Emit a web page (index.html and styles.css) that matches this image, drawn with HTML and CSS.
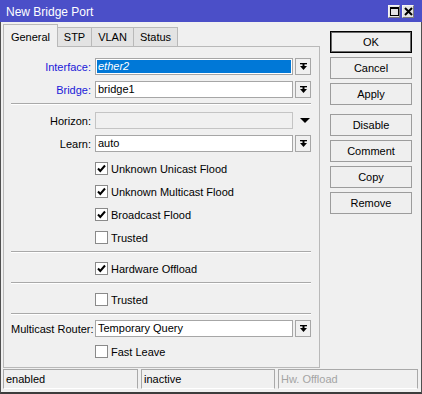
FILE: index.html
```html
<!DOCTYPE html>
<html lang="en">
<head>
    <meta charset="UTF-8">
    <title>New Bridge Port</title>
    <link rel="stylesheet" href="styles.css">
</head>
<body>
    <div class="window">
        <div class="titlebar">
            <span class="title">New Bridge Port</span>
            <div class="winbtns">
                <span class="winbtn">
                    <svg width="9" height="9" viewBox="0 0 9 9"><rect x="0.5" y="0.5" width="8" height="8" fill="none" stroke="#000"/><rect x="0" y="0" width="9" height="2" fill="#000"/></svg>
                </span>
                <span class="winbtn">
                    <svg width="9" height="9" viewBox="0 0 9 9"><path d="M1 1 L8 8 M8 1 L1 8" stroke="#000" stroke-width="2"/></svg>
                </span>
            </div>
        </div>

        <div class="frame">
            <div class="main">
                <div class="left">
                    <div class="tabs">
                        <div class="tab active t-general">General</div>
                        <div class="tab t-stp">STP</div>
                        <div class="tab t-vlan">VLAN</div>
                        <div class="tab t-status">Status</div>
                    </div>

                    <div class="panel">
                        <div class="row">
                            <div class="lbl link">Interface:</div>
                            <div class="field"><span class="selval">ether2</span></div>
                            <span class="drop"><svg width="7" height="7" viewBox="0 0 7 7"><rect x="0" y="0" width="7" height="1.3"/><rect x="2.5" y="1" width="2" height="2"/><polygon points="0,3 7,3 3.5,7"/></svg></span>
                        </div>
                        <div class="row">
                            <div class="lbl link">Bridge:</div>
                            <div class="field">bridge1</div>
                            <span class="drop"><svg width="7" height="7" viewBox="0 0 7 7"><rect x="0" y="0" width="7" height="1.3"/><rect x="2.5" y="1" width="2" height="2"/><polygon points="0,3 7,3 3.5,7"/></svg></span>
                        </div>

                        <div class="sep"></div>

                        <div class="row">
                            <div class="lbl">Horizon:</div>
                            <div class="field disabled"></div>
                            <span class="drop plain"><svg width="10" height="5" viewBox="0 0 10 5"><polygon points="0,0 10,0 5,5"/></svg></span>
                        </div>
                        <div class="row">
                            <div class="lbl">Learn:</div>
                            <div class="field">auto</div>
                            <span class="drop"><svg width="7" height="7" viewBox="0 0 7 7"><rect x="0" y="0" width="7" height="1.3"/><rect x="2.5" y="1" width="2" height="2"/><polygon points="0,3 7,3 3.5,7"/></svg></span>
                        </div>

                        <div class="row check first">
                            <span class="cb"><svg width="11" height="11" viewBox="0 0 11 11"><polyline points="2,5.5 4.3,8 9,2.5" fill="none" stroke="#000" stroke-width="2"/></svg></span>
                            <span>Unknown Unicast Flood</span>
                        </div>
                        <div class="row check">
                            <span class="cb"><svg width="11" height="11" viewBox="0 0 11 11"><polyline points="2,5.5 4.3,8 9,2.5" fill="none" stroke="#000" stroke-width="2"/></svg></span>
                            <span>Unknown Multicast Flood</span>
                        </div>
                        <div class="row check">
                            <span class="cb"><svg width="11" height="11" viewBox="0 0 11 11"><polyline points="2,5.5 4.3,8 9,2.5" fill="none" stroke="#000" stroke-width="2"/></svg></span>
                            <span>Broadcast Flood</span>
                        </div>
                        <div class="row check">
                            <span class="cb"></span>
                            <span>Trusted</span>
                        </div>

                        <div class="sep"></div>

                        <div class="row check">
                            <span class="cb"><svg width="11" height="11" viewBox="0 0 11 11"><polyline points="2,5.5 4.3,8 9,2.5" fill="none" stroke="#000" stroke-width="2"/></svg></span>
                            <span>Hardware Offload</span>
                        </div>

                        <div class="sep"></div>

                        <div class="row check">
                            <span class="cb"></span>
                            <span>Trusted</span>
                        </div>

                        <div class="sep tight"></div>

                        <div class="row">
                            <div class="lbl">Multicast Router:</div>
                            <div class="field">Temporary Query</div>
                            <span class="drop"><svg width="7" height="7" viewBox="0 0 7 7"><rect x="0" y="0" width="7" height="1.3"/><rect x="2.5" y="1" width="2" height="2"/><polygon points="0,3 7,3 3.5,7"/></svg></span>
                        </div>
                        <div class="row check">
                            <span class="cb"></span>
                            <span>Fast Leave</span>
                        </div>
                    </div>
                </div>

                <div class="buttons">
                    <div class="btn default">OK</div>
                    <div class="btn">Cancel</div>
                    <div class="btn">Apply</div>
                    <div class="btn spaced">Disable</div>
                    <div class="btn">Comment</div>
                    <div class="btn">Copy</div>
                    <div class="btn">Remove</div>
                </div>
            </div>

            <div class="statusbar">
                <div class="stat s1">enabled</div>
                <div class="stat s2">inactive</div>
                <div class="stat s3 muted">Hw. Offload</div>
            </div>
        </div>
    </div>
</body>
</html>
```

FILE: styles.css
```css
body {
    margin: 0;
    font-family: "Liberation Sans", Arial, sans-serif;
    font-size: 11px;
    color: #000;
    background-color: #f0f0f0;
}

.window {
    width: 422px;
    height: 394px;
    display: flex;
    flex-direction: column;
    background-color: #f0f0f0;
}

.titlebar {
    flex: none;
    height: 22px;
    background-color: #4b4fc8;
    color: #fff;
    display: flex;
    align-items: center;
    justify-content: space-between;
    padding: 0 8px 0 6px;
    box-sizing: border-box;
}

.title {
    font-size: 12px;
    padding-top: 1px;
}

.winbtns {
    display: flex;
    gap: 2px;
    padding-top: 1px;
}

.winbtn {
    width: 12px;
    height: 13px;
    box-sizing: border-box;
    background-color: #e4e4e4;
    border: 1px solid #f4f4f4;
    border-right-color: #7a7a7a;
    border-bottom-color: #7a7a7a;
    display: flex;
    align-items: center;
    justify-content: center;
}

.frame {
    flex: 1;
    display: flex;
    flex-direction: column;
    border-left: 1px solid #505050;
    border-right: 1px solid #505050;
    border-bottom: 2px solid #3c3c3c;
}

.main {
    display: flex;
    padding: 2px 0 0 2px;
}

.left {
    width: 317px;
}

/* tabs */

.tabs {
    display: flex;
    align-items: flex-end;
    height: 22px;
}

.tab {
    box-sizing: border-box;
    height: 19px;
    padding-top: 3px;
    text-align: center;
    line-height: 13px;
    background-color: #e3e3e3;
    border: 1px solid #b9b9b9;
    border-bottom: none;
    border-left: none;
}

.tab.active {
    position: relative;
    z-index: 1;
    height: 23px;
    margin-bottom: -1px;
    padding-top: 6px;
    background-color: #f0f0f0;
    border-left: 1px solid #b9b9b9;
}

.t-general { width: 55px; }
.t-stp { width: 34px; }
.t-vlan { width: 42px; }
.t-status { width: 44px; }

.panel {
    box-sizing: border-box;
    height: 322px;
    border: 1px solid #b9b9b9;
    padding: 11px 8px 0 7px;
}

/* rows */

.row {
    display: flex;
    align-items: center;
    height: 17px;
    margin-top: 6px;
}

.row:first-child {
    margin-top: 0;
}

.lbl {
    width: 80px;
    margin-right: 4px;
    text-align: right;
    white-space: nowrap;
}

.lbl.link {
    color: #1a1ad8;
}

.field {
    box-sizing: border-box;
    width: 198px;
    height: 17px;
    background-color: #fff;
    border: 1px solid #a6a6a6;
    padding: 0 2px;
    line-height: 15px;
    white-space: nowrap;
    overflow: hidden;
}

.field.disabled {
    background-color: #f0f0f0;
    border-color: #c4c4c4;
}

.selval {
    display: block;
    margin: 1px -1px 0 -1px;
    height: 13px;
    line-height: 13px;
    padding-left: 1px;
    background-color: #0078d7;
    color: #fff;
    font-style: italic;
}

.drop {
    box-sizing: border-box;
    width: 16px;
    height: 17px;
    margin-left: 2px;
    border: 1px solid #a6a6a6;
    background-color: #f0f0f0;
    display: flex;
    align-items: center;
    justify-content: center;
}

.drop.plain {
    border: none;
    background: none;
    padding-left: 3px;
}

.row.check {
    padding-left: 84px;
}

.row.check.first {
    margin-top: 8px;
}

.cb {
    box-sizing: border-box;
    width: 13px;
    height: 13px;
    margin-right: 3px;
    background-color: #fff;
    border: 1px solid #8a8a8a;
    display: flex;
    align-items: center;
    justify-content: center;
}

.sep {
    height: 0;
    border-top: 1px solid #a9a9a9;
    border-bottom: 1px solid #fff;
    margin: 5px 0 7px;
}

.sep + .row {
    margin-top: 0;
}

.sep.tight {
    margin-bottom: 5px;
}

/* buttons */

.buttons {
    width: 82px;
    margin-left: 10px;
    padding-top: 7px;
    display: flex;
    flex-direction: column;
    gap: 4px;
}

.btn {
    box-sizing: border-box;
    height: 22px;
    line-height: 20px;
    text-align: center;
    background-color: #efefef;
    border: 1px solid #9c9c9c;
}

.btn.default {
    border-color: #000;
    box-shadow: inset 0 0 0 1px #6a6a6a;
}

.btn.spaced {
    margin-top: 5px;
}

/* status bar */

.statusbar {
    display: flex;
    gap: 3px;
    margin-top: 1px;
    padding-left: 2px;
}

.stat {
    box-sizing: border-box;
    height: 20px;
    line-height: 18px;
    padding-left: 2px;
    border: 1px solid #a9a9a9;
    border-bottom-color: #fff;
}

.s1 { width: 135px; }
.s2 { width: 134px; }
.s3 { width: 140px; }

.muted {
    color: #a4a4a4;
}
```
